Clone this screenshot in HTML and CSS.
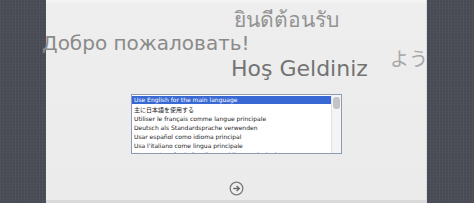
FILE: index.html
```html
<!DOCTYPE html>
<html>
<head>
<meta charset="utf-8">
<link rel="stylesheet" href="styles.css">
</head>
<body>
<div class="screen">
  <div class="side"></div>
  <div class="panel">
    <div class="cloud">
      <span class="w w-th">ยินดีต้อนรับ</span>
      <span class="w w-ru">Добро пожаловать!</span>
      <span class="w w-tr">Hoş Geldiniz</span>
      <span class="w w-ja">よう</span>
    </div>
    <div class="list">
      <div class="rows">
        <div class="row sel">Use English for the main language</div>
        <div class="row jp">主に日本語を使用する</div>
        <div class="row">Utiliser le français comme langue principale</div>
        <div class="row">Deutsch als Standardsprache verwenden</div>
        <div class="row">Usar español como idioma principal</div>
        <div class="row">Usa l'italiano come lingua principale</div>
        <div class="row">Usar português do Brasil como idioma principal</div>
      </div>
      <div class="scroll"><div class="thumb"></div></div>
    </div>
    <div class="next">
      <svg width="15" height="15" viewBox="0 0 15 15">
        <circle cx="7.5" cy="7.5" r="6.3" fill="#eeeeee" stroke="#7a7a7a" stroke-width="1.3"/>
        <path d="M4.3 7.5 H10" stroke="#666" stroke-width="1.4" fill="none"/>
        <path d="M7.6 4.9 L10.3 7.5 L7.6 10.1" stroke="#666" stroke-width="1.4" fill="none"/>
      </svg>
    </div>
  </div>
  <div class="side"></div>
</div>
</body>
</html>
```
FILE: styles.css
```css
html, body {
  margin: 0;
  padding: 0;
  width: 474px;
  height: 203px;
  overflow: hidden;
  background: #4b4e56;
}
.screen {
  display: flex;
  width: 474px;
  height: 203px;
}
.side {
  flex: 0 0 46px;
  background-color: #4a4d55;
  background-image: repeating-linear-gradient(90deg, rgba(255,255,255,0.03) 0 1px, transparent 1px 3px),
    repeating-linear-gradient(0deg, rgba(0,0,0,0.05) 0 1px, transparent 1px 3px);
}
.side:last-child {
  flex-basis: 47px;
  border-left: 1px solid #d8d8d8;
}
.panel {
  flex: 0 0 380px;
  height: 200px;
  position: relative;
  background: linear-gradient(#f6f6f6 0, #eeeeee 4px, #ebebeb 100%);
  border-bottom: 3px solid #d9d9d9;
  display: flex;
  flex-direction: column;
  align-items: flex-start;
}
.cloud {
  position: relative;
  height: 94px;
  width: 100%;
  flex: none;
}
.w {
  position: absolute;
  white-space: nowrap;
  font-family: "DejaVu Sans", "Noto Sans", sans-serif;
  line-height: 1;
}
.w-th {
  left: 188px;
  top: 10px;
  font-size: 21px;
  color: #939393;
}
.w-ru {
  left: -4px;
  top: 33px;
  font-size: 20px;
  color: #8a8a8a;
}
.w-tr {
  left: 185px;
  top: 58px;
  font-size: 22px;
  color: #737373;
}
.w-ja {
  left: 344px;
  top: 48px;
  font-size: 19px;
  color: #a8a8a8;
  font-family: "Noto Sans CJK JP", sans-serif;
}
.list {
  margin-left: 85px;
  width: 209px;
  height: 58px;
  border: 1px solid #8d9bb5;
  background: #ffffff;
  display: flex;
  overflow: hidden;
  flex: none;
}
.rows {
  flex: 1;
  padding-top: 1px;
  overflow: hidden;
}
.row {
  height: 9px;
  line-height: 9px;
  padding-left: 2px;
  font-family: "DejaVu Sans", sans-serif;
  font-size: 6px;
  color: #1a1a1a;
  white-space: nowrap;
}
.row.jp {
  font-family: "Noto Sans CJK JP", sans-serif;
}
.row.sel {
  height: 8px;
  line-height: 8px;
  background: #3868d4;
  color: #ffffff;
  margin-bottom: 1px;
}
.scroll {
  flex: 0 0 7px;
  background: #f4f4f4;
  border-left: 1px solid #e2e2e2;
  padding: 2px 1px 0 1px;
}
.thumb {
  height: 12px;
  border-radius: 3px;
  background: #c4c4c4;
}
.next {
  margin-top: 27px;
  margin-left: 183px;
  width: 15px;
  height: 15px;
}
.next svg {
  display: block;
}
```
